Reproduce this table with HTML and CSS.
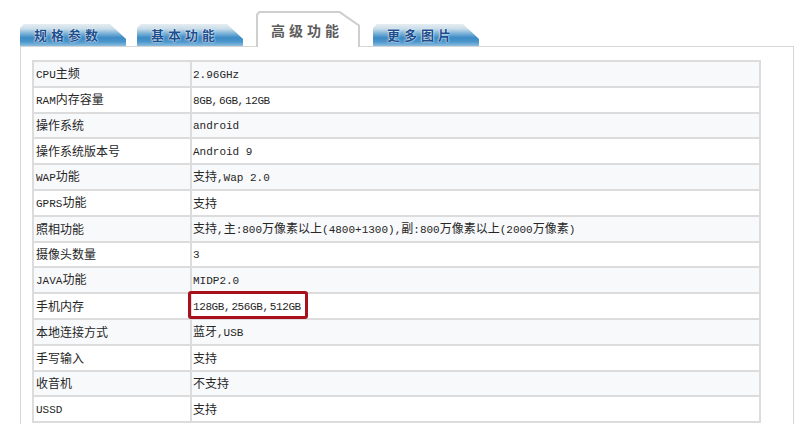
FILE: index.html
```html
<!DOCTYPE html>
<html lang="zh">
<head>
<meta charset="utf-8">
<title>高级功能</title>
<link rel="stylesheet" href="styles.css">
</head>
<body>
<div class="tabs">
  <div class="tab">规格参数</div>
  <div class="tab">基本功能</div>
  <div class="tab active">高级功能</div>
  <div class="tab">更多图片</div>
</div>
<div class="panel">
  <table class="spec">
    <tr><td class="k"><span class="en">CPU</span>主频</td><td><span class="en">2.96GHz</span></td></tr>
    <tr><td class="k"><span class="en">RAM</span>内存容量</td><td><span class="en list">8GB, 6GB, 12GB</span></td></tr>
    <tr><td class="k">操作系统</td><td><span class="en">android</span></td></tr>
    <tr><td class="k">操作系统版本号</td><td><span class="en">Android 9</span></td></tr>
    <tr><td class="k"><span class="en">WAP</span>功能</td><td>支持<span class="en">,Wap 2.0</span></td></tr>
    <tr><td class="k"><span class="en">GPRS</span>功能</td><td>支持</td></tr>
    <tr><td class="k">照相功能</td><td>支持<span class="en">,</span>主<span class="en">:800</span>万像素以上<span class="en">(4800+1300),</span>副<span class="en">:800</span>万像素以上<span class="en">(2000</span>万像素<span class="en">)</span></td></tr>
    <tr><td class="k">摄像头数量</td><td><span class="en">3</span></td></tr>
    <tr><td class="k"><span class="en">JAVA</span>功能</td><td><span class="en">MIDP2.0</span></td></tr>
    <tr><td class="k">手机内存</td><td class="mark"><span class="en list">128GB, 256GB, 512GB</span><span class="redbox"></span></td></tr>
    <tr><td class="k">本地连接方式</td><td>蓝牙<span class="en">,USB</span></td></tr>
    <tr><td class="k">手写输入</td><td>支持</td></tr>
    <tr><td class="k">收音机</td><td>不支持</td></tr>
    <tr><td class="k"><span class="en">USSD</span></td><td>支持</td></tr>
  </table>
</div>
</body>
</html>
```
FILE: styles.css
```css
html, body {
  margin: 0;
  padding: 0;
  background: #ffffff;
}
body {
  width: 800px;
  height: 424px;
  overflow: hidden;
  font-family: "Noto Sans CJK SC", "Liberation Sans", sans-serif;
  color: #262626;
}
.tabs {
  display: flex;
  align-items: flex-end;
  height: 47px;
  padding-left: 20px;
  gap: 11px;
  position: relative;
  z-index: 2;
}
.tab {
  width: 106px;
  height: 22px;
  margin-bottom: 1px;
  box-sizing: border-box;
  padding-left: 14px;
  font-size: 13px;
  font-weight: 700;
  letter-spacing: 4px;
  line-height: 22px;
  color: #1c4f8e;
  text-shadow: 0 0 2px #ffffff, 0 0 1px #ffffff;
  background: linear-gradient(to bottom, #e6edf1 0%, #c9dde9 22%, #7fb4d8 42%, #3e8cc6 62%, #4a95cb 80%, #8dbfe0 100%);
  clip-path: polygon(0 4px, 4px 0, 90px 0, 106px 15px, 106px 100%, 0 100%);
}
.tab.active {
  position: relative;
  z-index: 1;
  isolation: isolate;
  width: 104px;
  height: 36px;
  margin-bottom: 0;
  margin-left: 2px;
  margin-right: 2px;
  padding-left: 15px;
  padding-top: 6px;
  font-size: 14px;
  line-height: 26px;
  color: #5d5d5d;
  text-shadow: none;
  background: #cfcfcf;
  clip-path: polygon(0 3px, 3px 0, 84px 0, 104px 14px, 104px 100%, 0 100%);
}
.tab.active::before {
  content: "";
  position: absolute;
  left: 2px;
  top: 2px;
  right: 2px;
  bottom: 0;
  background: #ffffff;
  clip-path: polygon(0 2px, 2px 0, 81px 0, 100px 13px, 100px 100%, 0 100%);
  z-index: -1;
}
.panel {
  margin-left: 20px;
  width: 774px;
  height: 390px;
  box-sizing: border-box;
  border: 1px solid #d6d6d6;
  border-bottom: none;
  margin-top: -1px;
  padding: 13px 0 0 11px;
}
.spec {
  border-collapse: collapse;
  width: 729px;
  font-size: 12px;
}
.spec td {
  border: 2px solid #dcdcdc;
  height: 23.8px;
  padding: 0 0 0 1px;
  white-space: nowrap;
  vertical-align: middle;
  line-height: 16px;
}
.spec tr:nth-child(odd) td {
  background: #f8f9fb;
}
.spec td.k {
  width: 154px;
  padding-left: 2px;
}
.en {
  font-family: "Liberation Mono", "DejaVu Sans Mono", monospace;
  font-size: 11px;
}
.en.list {
  word-spacing: -5px;
  letter-spacing: -0.4px;
}
.mark {
  position: relative;
}
.redbox {
  position: absolute;
  left: -4px;
  top: -3px;
  width: 114px;
  height: 22px;
  border: 3px solid #a8101c;
  border-radius: 3px;
}
```
